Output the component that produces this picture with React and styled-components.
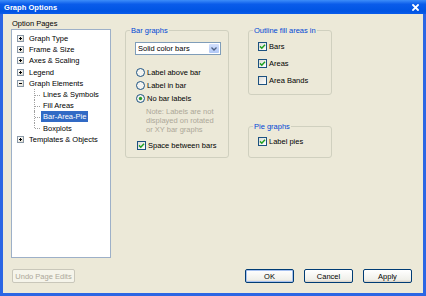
import styled, { createGlobalStyle } from 'styled-components'

const GlobalStyle = createGlobalStyle`
  html, body { margin: 0; padding: 0; }
  body {
    font-family: "Liberation Sans", Arial, sans-serif;
    font-size: 7.5px;
    color: #000;
  }
`

const Window = styled.div`
  width: 426px;
  height: 296px;
  display: flex;
  flex-direction: column;
  background: #2B66E4;
  overflow: hidden;
`

const TitleBar = styled.div`
  height: 14px;
  flex: none;
  display: flex;
  align-items: center;
  justify-content: space-between;
  padding: 0 7px 0 4px;
  background: linear-gradient(#3D8DF9, #0A5CEA 30%, #0054E3 80%, #0A5CEA);
`

const Title = styled.span`
  color: #fff;
  font-weight: bold;
  font-size: 7.5px;
  letter-spacing: 0.05px;
`

const Client = styled.div`
  flex: 1;
  min-height: 0;
  margin: 0 3px 3px;
  background: #ECE9D8;
  display: flex;
  flex-direction: column;
`

const Main = styled.div`
  flex: 1;
  min-height: 0;
  display: flex;
`

const Sidebar = styled.div`
  width: 100px;
  margin-left: 8px;
  display: flex;
  flex-direction: column;
`

const PaneLabel = styled.div`
  padding: 5px 0 0 1px;
  line-height: 10px;
  height: 10px;
`

const TreeBox = styled.div`
  flex: 1;
  background: #fff;
  border: 1px solid #9DB0C8;
  padding-top: 3px;
`

const TreeRow = styled.div`
  height: 11.2px;
  display: flex;
  align-items: center;
  padding-left: ${p => (p.$child ? 22 : 5)}px;
`

const Expander = styled.span`
  position: relative;
  width: 7px;
  height: 7px;
  box-sizing: border-box;
  border: 1px solid #8A99A8;
  background: linear-gradient(135deg, #fff, #E2DED0);
  &::before {
    content: '';
    position: absolute;
    left: 1px;
    top: 2px;
    width: 3px;
    height: 1px;
    background: #000;
  }
  &::after {
    content: '';
    display: ${p => (p.$open ? 'none' : 'block')};
    position: absolute;
    left: 2px;
    top: 1px;
    width: 1px;
    height: 3px;
    background: #000;
  }
`

const Branch = styled.span`
  position: relative;
  width: 6px;
  align-self: flex-start;
  height: ${p => (p.$last ? '50%' : '100%')};
  border-left: 1px dotted #A0A0A0;
  &::after {
    content: '';
    position: absolute;
    left: 0;
    top: ${p => (p.$last ? '100%' : '50%')};
    width: 5px;
    border-top: 1px dotted #A0A0A0;
  }
`

const NodeLabel = styled.span`
  margin-left: ${p => (p.$child ? 0 : 3)}px;
  padding: 0 2px;
  line-height: 11px;
  height: 11px;
  white-space: nowrap;
  background: ${p => (p.$selected ? '#316AC5' : 'transparent')};
  color: ${p => (p.$selected ? '#fff' : '#000')};
`

const Panels = styled.div`
  display: flex;
  align-items: flex-start;
  gap: 19px;
  margin-left: 14px;
  padding-top: 16px;
`

const Column = styled.div`
  display: flex;
  flex-direction: column;
`

const Group = styled.div`
  position: relative;
  box-sizing: border-box;
  width: ${p => p.$w}px;
  height: ${p => p.$h}px;
  margin-top: ${p => p.$mt || 0}px;
  padding: ${p => p.$pt}px 0 0 9px;
  border: 1px solid #D0D0BF;
  border-radius: 3px;
`

const Caption = styled.span`
  position: absolute;
  top: -5.5px;
  left: 4px;
  padding: 0 1px;
  line-height: 9px;
  background: #ECE9D8;
  color: #0046D5;
  white-space: nowrap;
`

const Select = styled.div`
  width: 86px;
  height: 13px;
  box-sizing: border-box;
  border: 1px solid #7F9DB9;
  background: #fff;
  display: flex;
  align-items: center;
  justify-content: space-between;
  padding: 0 1px 0 2px;
`

const DropButton = styled.span`
  width: 10px;
  height: 9px;
  border-radius: 1px;
  background: linear-gradient(#D3E0FD, #B1C8F6);
  display: flex;
  align-items: center;
  justify-content: center;
`

const OptionList = styled.div`
  margin-top: 11px;
  margin-left: 1px;
`

const OptionRow = styled.label`
  height: ${p => p.$h || 13}px;
  display: flex;
  align-items: center;
  gap: 2px;
  margin-top: ${p => p.$mt || 0}px;
  margin-left: ${p => p.$ml || 0}px;
  white-space: nowrap;
`

const Note = styled.div`
  margin: 2px 0 0 11px;
  line-height: 9px;
  color: #ACA899;
`

const Box = styled.span`
  width: 9px;
  height: 9px;
  box-sizing: border-box;
  border: 1px solid #1C5180;
  background: linear-gradient(135deg, #DCDCD7, #fff);
  display: flex;
  align-items: center;
  justify-content: center;
`

const Footer = styled.div`
  height: 14px;
  flex: none;
  margin: 11px 0 10px;
  padding: 0 11px 0 9px;
  display: flex;
  justify-content: space-between;
`

const ButtonRow = styled.div`
  display: flex;
  gap: 10px;
`

const Button = styled.button`
  width: ${p => p.$w || 49}px;
  height: 14px;
  padding: 0;
  box-sizing: border-box;
  font: inherit;
  border-radius: 2px;
  border: 1px solid ${p => (p.disabled ? '#C9C7BA' : '#003C74')};
  background: ${p => (p.disabled ? '#F5F4EA' : 'linear-gradient(#fff, #F0F0EA 80%, #D6D0C5)')};
  color: ${p => (p.disabled ? '#ACA899' : '#000')};
  box-shadow: ${p => (p.$default ? 'inset 0 0 0 1px #A7C2F0' : 'none')};
`

const CloseIcon = () => (
  <svg width="7" height="7" viewBox="0 0 7 7">
    <path d="M1 1L6 6M6 1L1 6" stroke="#fff" strokeWidth="1.8" strokeLinecap="square" />
  </svg>
)

const Chevron = () => (
  <svg width="6" height="4" viewBox="0 0 6 4">
    <path d="M0.5 0.5L3 3L5.5 0.5" fill="none" stroke="#4D6185" strokeWidth="1.3" />
  </svg>
)

const Radio = ({ checked }) => (
  <svg width="9" height="9" viewBox="0 0 9 9">
    <circle cx="4.5" cy="4.5" r="4" fill="#F4F4F0" stroke="#1C5180" strokeWidth="1" />
    {checked && <circle cx="4.5" cy="4.5" r="1.7" fill="#2A9A2A" />}
  </svg>
)

const Checkbox = ({ checked }) => (
  <Box>
    {checked && (
      <svg width="7" height="7" viewBox="0 0 7 7">
        <path d="M1 3.4L2.8 5.2L6 1.8" fill="none" stroke="#21A121" strokeWidth="1.5" />
      </svg>
    )}
  </Box>
)

const tree = [
  { label: 'Graph Type' },
  { label: 'Frame & Size' },
  { label: 'Axes & Scaling' },
  { label: 'Legend' },
  { label: 'Graph Elements', open: true },
  { label: 'Lines & Symbols', child: true },
  { label: 'Fill Areas', child: true },
  { label: 'Bar-Area-Pie', child: true, selected: true },
  { label: 'Boxplots', child: true, last: true },
  { label: 'Templates & Objects' },
]

export default function App() {
  return (
    <>
      <GlobalStyle />
      <Window>
        <TitleBar>
          <Title>Graph Options</Title>
          <CloseIcon />
        </TitleBar>
        <Client>
          <Main>
            <Sidebar>
              <PaneLabel>Option Pages</PaneLabel>
              <TreeBox>
                {tree.map(node => (
                  <TreeRow key={node.label} $child={node.child}>
                    {node.child ? <Branch $last={node.last} /> : <Expander $open={node.open} />}
                    <NodeLabel $child={node.child} $selected={node.selected}>{node.label}</NodeLabel>
                  </TreeRow>
                ))}
              </TreeBox>
            </Sidebar>
            <Panels>
              <Group $w={104} $h={128} $pt={11}>
                <Caption>Bar graphs</Caption>
                <Select>
                  <span>Solid color bars</span>
                  <DropButton><Chevron /></DropButton>
                </Select>
                <OptionList>
                  <OptionRow><Radio />Label above bar</OptionRow>
                  <OptionRow><Radio />Label in bar</OptionRow>
                  <OptionRow><Radio checked />No bar labels</OptionRow>
                </OptionList>
                <Note>
                  Note: Labels are not<br />
                  displayed on rotated<br />
                  or XY bar graphs
                </Note>
                <OptionRow $mt={5} $ml={2}><Checkbox checked />Space between bars</OptionRow>
              </Group>
              <Column>
                <Group $w={84} $h={65} $pt={7}>
                  <Caption>Outline fill areas in</Caption>
                  <OptionRow $h={17}><Checkbox checked />Bars</OptionRow>
                  <OptionRow $h={17}><Checkbox checked />Areas</OptionRow>
                  <OptionRow $h={17}><Checkbox />Area Bands</OptionRow>
                </Group>
                <Group $w={84} $h={32} $pt={6} $mt={31}>
                  <Caption>Pie graphs</Caption>
                  <OptionRow $h={17}><Checkbox checked />Label pies</OptionRow>
                </Group>
              </Column>
            </Panels>
          </Main>
          <Footer>
            <Button $w={63} disabled>Undo Page Edits</Button>
            <ButtonRow>
              <Button $default>OK</Button>
              <Button>Cancel</Button>
              <Button>Apply</Button>
            </ButtonRow>
          </Footer>
        </Client>
      </Window>
    </>
  )
}
